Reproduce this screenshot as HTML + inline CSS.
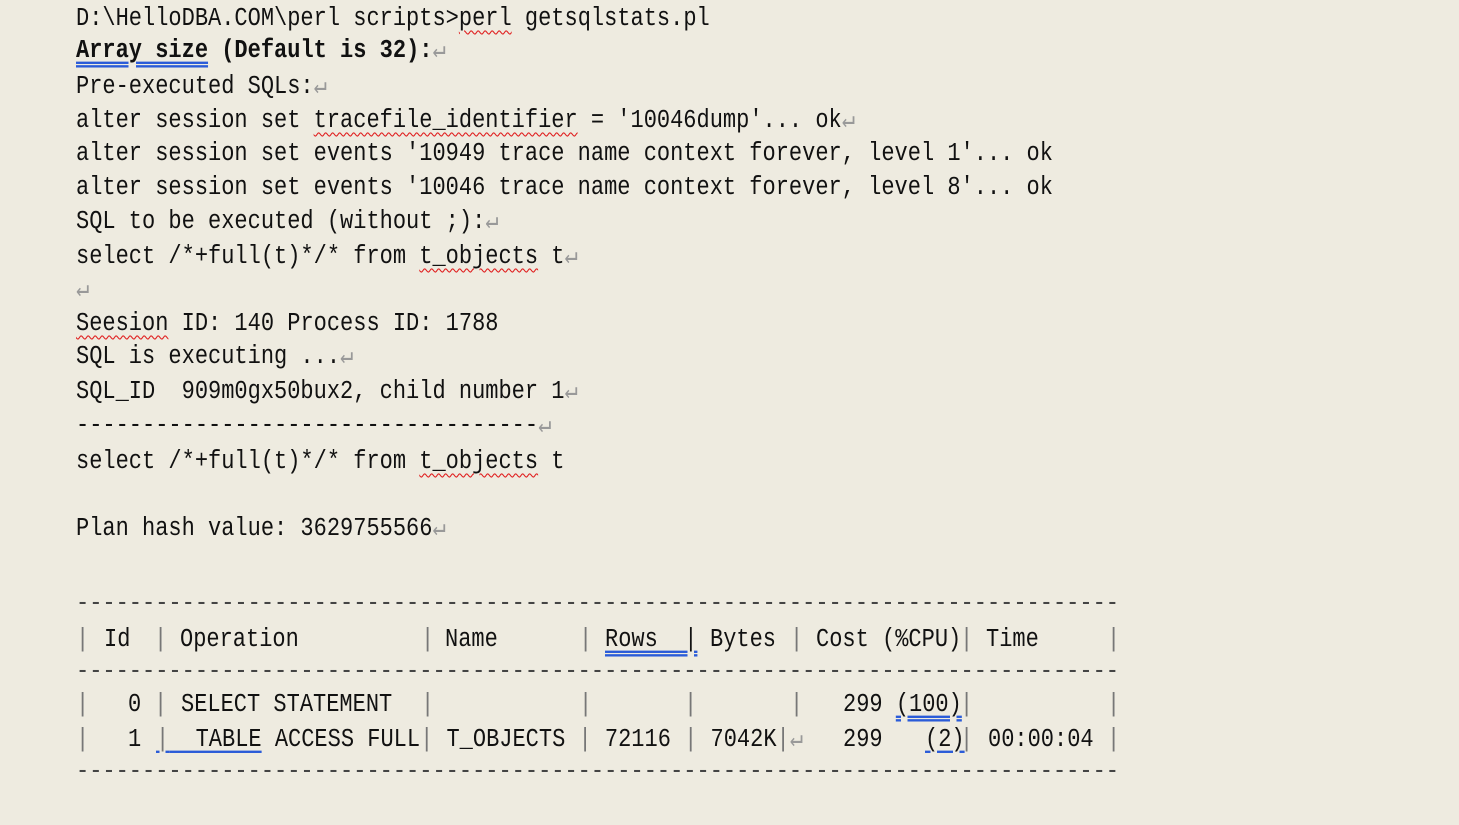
<!DOCTYPE html>
<html><head><meta charset="utf-8"><style>
body{margin:0;width:1459px;height:825px;background:#eeebe0;overflow:hidden;position:relative;font-family:"Liberation Mono","Noto Sans CJK SC",monospace;font-size:22px;color:#111}
.l{position:absolute;white-space:pre;line-height:30px;height:30px;transform:translateY(2px) scaleY(1.18);transform-origin:center}
.r{color:#999}
.w{text-decoration:underline wavy #e02020;text-decoration-thickness:1px;text-underline-offset:4px}
.b{text-decoration:underline double #2a5bd8;text-underline-offset:4px}
.bl{text-decoration:underline #2a5bd8;text-underline-offset:4px}
.p{color:#777}
.d{color:#444}
</style></head><body>
<div class="l" style="left:76px;top:2px">D:\HelloDBA.COM\perl scripts&gt;<span class="w">perl</span> getsqlstats.pl</div>
<div class="l" style="left:76px;top:34px;font-weight:bold"><span class="b">Array size</span> (Default is 32):<span class="r" style="font-weight:normal">↵</span></div>
<div class="l" style="left:76px;top:70px">Pre-executed SQLs:<span class="r">↵</span></div>
<div class="l" style="left:76px;top:104px">alter session set <span class="w">tracefile_identifier</span> = '10046dump'... ok<span class="r">↵</span></div>
<div class="l" style="left:76px;top:137px">alter session set events '10949 trace name context forever, level 1'... ok</div>
<div class="l" style="left:76px;top:171px">alter session set events '10046 trace name context forever, level 8'... ok</div>
<div class="l" style="left:76px;top:205px">SQL to be executed (without ;):<span class="r">↵</span></div>
<div class="l" style="left:76px;top:240px">select /*+full(t)*/* from <span class="w">t_objects</span> t<span class="r">↵</span></div>
<div class="l r" style="left:76px;top:273px">↵</div>
<div class="l" style="left:76px;top:307px"><span class="w">Seesion</span> ID: 140 Process ID: 1788</div>
<div class="l" style="left:76px;top:340px">SQL is executing ...<span class="r">↵</span></div>
<div class="l" style="left:76px;top:375px">SQL_ID  909m0gx50bux2, child number 1<span class="r">↵</span></div>
<div class="l" style="left:76px;top:409px">-----------------------------------<span class="r">↵</span></div>
<div class="l" style="left:76px;top:445px">select /*+full(t)*/* from <span class="w">t_objects</span> t</div>
<div class="l" style="left:76px;top:512px">Plan hash value: 3629755566<span class="r">↵</span></div>
<div class="l d" style="left:76px;top:587px">-------------------------------------------------------------------------------</div>
<div class="l d" style="left:76px;top:655px">-------------------------------------------------------------------------------</div>
<div class="l d" style="left:76px;top:755px">-------------------------------------------------------------------------------</div>
<div class="l p" style="left:76px;top:623px">|</div>
<div class="l" style="left:104px;top:623px">Id</div>
<div class="l p" style="left:154px;top:623px">|</div>
<div class="l" style="left:180px;top:623px">Operation</div>
<div class="l p" style="left:421px;top:623px">|</div>
<div class="l" style="left:445px;top:623px">Name</div>
<div class="l p" style="left:579px;top:623px">|</div>
<div class="l" style="left:605px;top:623px"><span class="b">Rows  |</span></div>
<div class="l" style="left:710px;top:623px">Bytes</div>
<div class="l p" style="left:790px;top:623px">|</div>
<div class="l" style="left:816px;top:623px">Cost (%CPU)</div>
<div class="l p" style="left:960px;top:623px">|</div>
<div class="l" style="left:986px;top:623px">Time</div>
<div class="l p" style="left:1107px;top:623px">|</div>
<div class="l p" style="left:76px;top:688px">|</div>
<div class="l" style="left:128px;top:688px">0</div>
<div class="l p" style="left:154px;top:688px">|</div>
<div class="l" style="left:181px;top:688px">SELECT STATEMENT</div>
<div class="l p" style="left:421px;top:688px">|</div>
<div class="l p" style="left:579px;top:688px">|</div>
<div class="l p" style="left:684px;top:688px">|</div>
<div class="l p" style="left:790px;top:688px">|</div>
<div class="l" style="left:843px;top:688px">299 <span class="b">(100)</span></div>
<div class="l p" style="left:960px;top:688px">|</div>
<div class="l p" style="left:1107px;top:688px">|</div>
<div class="l p" style="left:76px;top:723px">|</div>
<div class="l" style="left:128px;top:723px">1</div>
<div class="l" style="left:156px;top:723px"><span class="bl"><span class="p">|</span>  TABLE</span> ACCESS FULL<span class="p">|</span> T_OBJECTS <span class="p">|</span> 72116 <span class="p">|</span> 7042K<span class="p">|</span><span class="r">↵</span></div>
<div class="l" style="left:843px;top:723px">299</div>
<div class="l" style="left:925px;top:723px"><span class="bl">(2)</span></div>
<div class="l p" style="left:960px;top:723px">|</div>
<div class="l" style="left:988px;top:723px">00:00:04</div>
<div class="l p" style="left:1107px;top:723px">|</div>
</body></html>
